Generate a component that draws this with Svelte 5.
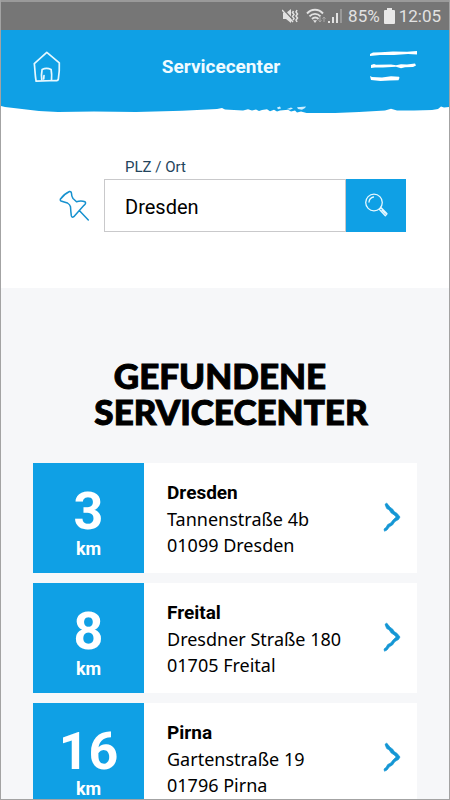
<!--
  Servicecenter search
  Location search with a list of nearby service centers
-->

<script lang="ts">
  interface Center {
    distance: number;
    name: string;
    street: string;
    city: string;
  }

  let query = $state('Dresden');

  const centers: Center[] = [
    { distance: 3, name: 'Dresden', street: 'Tannenstraße 4b', city: '01099 Dresden' },
    { distance: 8, name: 'Freital', street: 'Dresdner Straße 180', city: '01705 Freital' },
    { distance: 16, name: 'Pirna', street: 'Gartenstraße 19', city: '01796 Pirna' }
  ];

  function handleSubmit(event: SubmitEvent): void {
    event.preventDefault();
  }
</script>

<div class="screen">
  <!-- Phone status bar -->
  <div class="status-bar">
    <svg width="17" height="16" viewBox="0 0 17 16" aria-hidden="true">
      <path d="M1 5h3l5-4v14l-5-4H1z" fill="#e2e2e2" />
      <path d="M1 1l11 12" stroke="#767676" stroke-width="1.5" />
      <path d="M0 2l11 12" stroke="#e2e2e2" stroke-width="1.5" />
      <path d="M11.500 3l-1 1.500 1.500 2-1.500 2 1.500 2-1 1.500M15 2l-1 2 1.500 2-1.500 2 1.500 2-1.500 2 1 2" fill="none" stroke="#e2e2e2" stroke-width="1.5" />
    </svg>
    <svg class="wifi" width="20" height="16" viewBox="0 0 20 16" aria-hidden="true">
      <path d="M1 5.5c4.500-5 11.500-5 16 0M3.500 8.300c3.200-3.300 7.800-3.300 11 0M6 11c2-2 4.500-2 6.500 0" fill="none" stroke="#e2e2e2" stroke-width="1.9" />
      <path d="M7 12.300h4L9 15z" fill="#e2e2e2" />
      <path d="M14 9v5m-1.500-1.700L14 14l1.500-1.700M18 14V9m-1.500 1.700L18 9l1.500 1.700" fill="none" stroke="#a8a8a8" />
    </svg>
    <svg width="16" height="16" viewBox="0 0 16 16" aria-hidden="true">
      <path d="M0 13h2v2H0zM4 9h2v6H4zM8 5h2v10H8z" fill="#e2e2e2" />
      <path d="M12 1h2v14h-2z" fill="#999" />
    </svg>
    <span>85%</span>
    <svg class="battery" width="11" height="16" viewBox="0 0 11 16" aria-hidden="true">
      <path d="M3 0h5v2h2q1 0 1 1v12q0 1-1 1H1q-1 0-1-1V3q0-1 1-1h2z" fill="#e8e8e8" />
    </svg>
    <span>12:05</span>
  </div>

  <!-- Header -->
  <header class="header">
    <a class="icon-link" href="#home" aria-label="Startseite">
      <svg width="28" height="32" viewBox="0 0 28 32" fill="none" stroke="#e6f8ff" stroke-width="1.7" stroke-linecap="round" stroke-linejoin="round">
        <path d="M3 29.500C2 24 2 18 1.300 12.600L13.800 1.300 26.300 11.800c.3 6-.3 12-1 16.500q-.3 1.400-2 1.200L3 30.200" />
        <path d="M8.800 29c-.5-3.500-.4-7 .3-10.500 2.500-1.200 6.500-1.200 9 0 .7 3.500.7 7 .4 10.500M11 24.500l-.3 3.500" />
      </svg>
    </a>
    <h1 class="title">Servicecenter</h1>
    <button class="menu-btn" type="button" aria-label="Menü öffnen">
      <svg width="48" height="32" viewBox="0 0 48 32" fill="#fff">
        <path d="M1 3l3-1.500 8-.2 12-.8 14 .2L48 0v3.500l-9-.4-14 1-14-.2L1 5z" />
        <path d="M2 14l3-1 2 .8 15-.3 5 .7 5-.9 6 .2 8-1 1 2-3 1.500-8 .2-4 1-5-1.500-13 .8H6L2 17z" />
        <path d="M1 25l2 1 10 .5 9-1.200 8 .5 .5 1-1 2.500-9 .3-9 .4L2 29z" />
      </svg>
    </button>
  </header>
  <svg class="torn-edge" viewBox="0 0 448 8" preserveAspectRatio="none" aria-hidden="true">
    <path d="M0 0H448V2l-5 .5-3-1-3 2.500-6 1-18 .4-17 .2-6-1.800-6 1.800-26 1.500-24 .8-28 .2-6-1.500-4 .8-2-1.800-4 1-3-1.800-8 .6-3 1-3-1.600-4 1.400-3-2-5 .9-3 1-3-1.600-4 1-4-1.300-5 1.200-9-.4-9-.6-3-1.400-5 1-35 1.800-46 1.200-42-.5-36 .4-19-1L4 2 0 1z" fill="#0fa0e5" />
    <path d="M296 2.200l9-.8-1 1.500-3 1.800-4-.6zM276 2.500l3-1 1 2-3 .8zM286 4l4-1.500 2 1-3 1.200z" fill="#cdeeff" />
  </svg>

  <!-- Search -->
  <form class="search" onsubmit={handleSubmit}>
    <label class="search-label" for="location">PLZ / Ort</label>
    <svg class="pin" width="32" height="32" viewBox="0 0 32 32" fill="none" stroke="#1691cf" stroke-width="1.5" stroke-linecap="round" stroke-linejoin="round" aria-hidden="true">
      <path d="M1.300 9.300Q5 4 10.500 1.500q1.800-.3 2 2 0 3 1.500 5l3.500 3.300q4.500-1.800 8.500 0 1.500 1.500-1 3.500l-4.700 5.200-5.500 6.200q-2 1.300-2.500-1-.5-4-.8-9-.5-2-3-3.700-3.500-1-6.500-2-.9-.5-.7-1.700zM20.300 20.500l9 9.500" />
    </svg>
    <input class="search-input" id="location" type="text" bind:value={query} />
    <button class="search-btn" type="submit" aria-label="Suchen">
      <svg width="24" height="24" viewBox="0 0 24 24" fill="none" stroke="#e6f8ff" stroke-width="1.300" stroke-linecap="round" stroke-linejoin="round">
        <circle cx="10" cy="9.500" r="8.300" />
        <path d="M5 9q.4-4 4.500-5M15.500 16.500l1.700-1.700 5.800 6-1.700 1.900zM18 17l3.200 3.400" />
      </svg>
    </button>
  </form>

  <!-- Results -->
  <main class="results">
    <h2 class="results-title">
      <span class="first-line">GEFUNDENE</span>
      <span>SERVICECENTER</span>
    </h2>
    <ul class="center-list">
      {#each centers as center}
        <li>
          <a class="card" href="#{center.name}">
            <div class="distance">
              <span class="distance-value">{center.distance}</span>
              <span class="distance-unit">km</span>
            </div>
            <div class="address">
              <strong>{center.name}</strong>
              <span>{center.street}</span>
              <span>{center.city}</span>
            </div>
            <svg class="chevron" width="18" height="30" viewBox="0 0 18 30" fill="#1496d4" stroke="#1496d4" stroke-width=".7" aria-hidden="true">
              <path d="M2 2.500Q3.500 0 5 2.500l2 2.700 2.800 2 1.400 2.300 3 2L17 15l-1.500 2.500-3.500 2-2.500 3.500-3 1.700L4 28l-2.500 1.200L1 27l2-1.500 1.700-3 3-1.500 2.500-3.200L13.200 15 11 12.800 8.200 11 6.200 8 3.700 6.500z" />
            </svg>
          </a>
        </li>
      {/each}
    </ul>
  </main>
</div>

<style>
  :global(body) {
    margin: 0;
  }

  .screen {
    box-sizing: border-box;
    height: 100vh;
    overflow-y: auto;
    scrollbar-width: none;
    border: 1px solid #a3a3a3;
    border-top: none;
    background: #fff;
    color: #000;
    font-family: Roboto, 'Liberation Sans', sans-serif;
  }

  .status-bar {
    display: flex;
    align-items: center;
    justify-content: flex-end;
    box-sizing: border-box;
    height: 30px;
    padding-right: 8px;
    border-top: 2px solid #9a9a9a;
    background: #767676;
    color: #e2e2e2;
    font-size: 17px;
  }

  .status-bar .wifi {
    margin: 0 2px 0 7px;
  }

  .status-bar span,
  .status-bar .battery {
    margin-left: 4px;
  }

  .header {
    display: grid;
    grid-template-columns: 40px 1fr 48px;
    align-items: center;
    box-sizing: border-box;
    height: 75px;
    padding: 0 32px 2px;
    background: #0fa0e5;
    color: #f0fbff;
  }

  .icon-link,
  .menu-btn {
    display: flex;
    padding: 0;
    border: none;
    background: none;
    cursor: pointer;
  }

  .title {
    margin: 0;
    font-size: 19px;
    font-weight: 700;
    line-height: 24px;
    text-align: center;
  }

  .torn-edge {
    display: block;
    width: 100%;
    height: 8px;
  }

  .search {
    display: grid;
    grid-template-columns: 45px 1fr 60px;
    align-items: center;
    padding: 44px 43px 56px 58px;
  }

  .search-label {
    grid-column: 2 / -1;
    padding: 0 0 2px 21px;
    color: #23445c;
    font-size: 15px;
    line-height: 20px;
  }

  .pin {
    grid-column: 1;
  }

  .search-input {
    box-sizing: border-box;
    width: 100%;
    height: 53px;
    padding: 2px 20px 0;
    border: 1px solid #c9c9cb;
    border-radius: 0;
    outline: none;
    background: #fff;
    color: #000;
    font-family: inherit;
    font-size: 20px;
  }

  .search-btn {
    display: flex;
    align-items: center;
    justify-content: center;
    height: 53px;
    padding: 0 0 2px;
    border: none;
    background: #0fa0e5;
    cursor: pointer;
  }

  .results {
    padding: 69px 32px 32px;
    background: #f6f7f9;
  }

  .results-title {
    display: flex;
    flex-direction: column;
    align-items: center;
    margin: 0 0 34px;
    padding-left: 12px;
    font-family: Lato, 'Open Sans', sans-serif;
    font-size: 35px;
    font-weight: 900;
    line-height: 36px;
    -webkit-text-stroke: 1px #000;
  }

  .first-line {
    padding-right: 22px;
  }

  .center-list {
    display: flex;
    flex-direction: column;
    gap: 10px;
    margin: 0;
    padding: 0;
    list-style: none;
  }

  .card {
    display: flex;
    align-items: center;
    min-height: 110px;
    padding-right: 16px;
    background: #fff;
    color: #000;
    text-decoration: none;
  }

  .distance {
    display: flex;
    flex-direction: column;
    align-items: center;
    align-self: stretch;
    justify-content: center;
    width: 111px;
    padding-top: 10px;
    box-sizing: border-box;
    background: #0fa0e5;
    color: #fff;
  }

  .distance-value {
    font-size: 52px;
    font-weight: 700;
    line-height: 52px;
  }

  .distance-unit {
    font-size: 18px;
    font-weight: 700;
    line-height: 22px;
  }

  .address {
    display: flex;
    flex: 1;
    flex-direction: column;
    padding: 2px 0 0 23px;
    font-family: 'Noto Sans', sans-serif;
    font-size: 18px;
    line-height: 26px;
  }

  .address strong {
    font-family: Roboto, sans-serif;
    font-size: 19px;
    font-weight: 700;
  }

  .chevron {
    margin-bottom: 2px;
  }
</style>
